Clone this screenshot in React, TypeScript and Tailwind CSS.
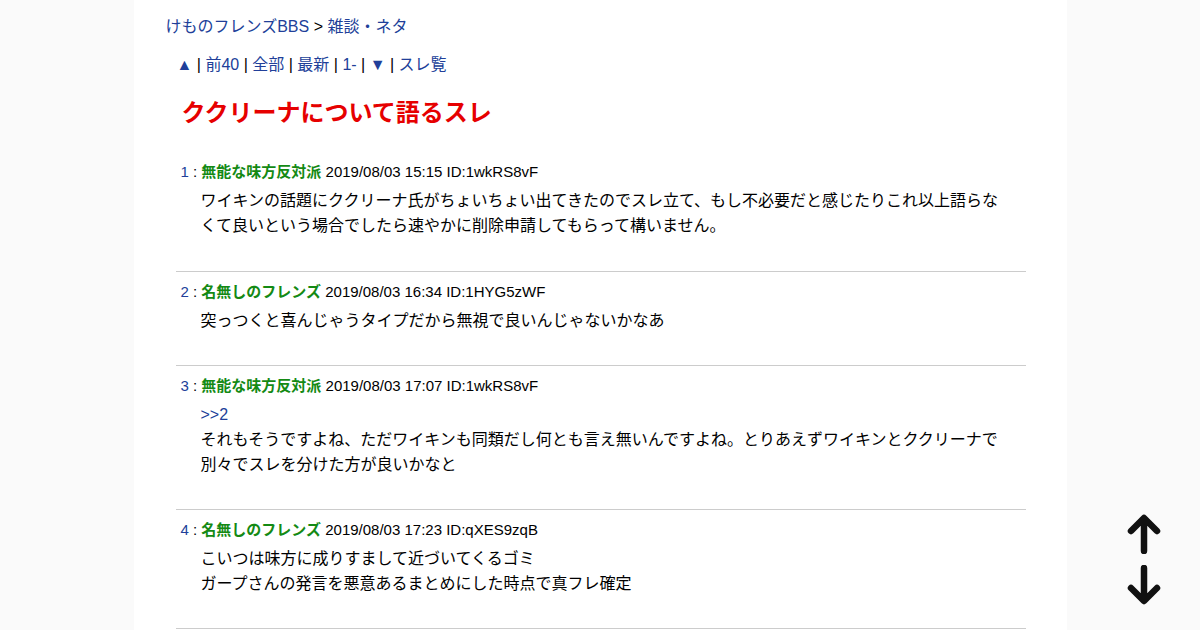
import React from "react";

const font = { fontFamily: '"Liberation Sans", Arial, "Noto Sans CJK JP", sans-serif' };

type Post = { no: number; name: string; date: string; id: string; lines: React.ReactNode[] };

const posts: Post[] = [
  {
    no: 1,
    name: "無能な味方反対派",
    date: "2019/08/03 15:15",
    id: "1wkRS8vF",
    lines: [
      "ワイキンの話題にククリーナ氏がちょいちょい出てきたのでスレ立て、もし不必要だと感じたりこれ以上語らなくて良いという場合でしたら速やかに削除申請してもらって構いません。",
    ],
  },
  {
    no: 2,
    name: "名無しのフレンズ",
    date: "2019/08/03 16:34",
    id: "1HYG5zWF",
    lines: ["突っつくと喜んじゃうタイプだから無視で良いんじゃないかなあ"],
  },
  {
    no: 3,
    name: "無能な味方反対派",
    date: "2019/08/03 17:07",
    id: "1wkRS8vF",
    lines: [
      <a key="a" className="text-[#213f99]">&gt;&gt;2</a>,
      "それもそうですよね、ただワイキンも同類だし何とも言え無いんですよね。とりあえずワイキンとククリーナで別々でスレを分けた方が良いかなと",
    ],
  },
  {
    no: 4,
    name: "名無しのフレンズ",
    date: "2019/08/03 17:23",
    id: "qXES9zqB",
    lines: ["こいつは味方に成りすまして近づいてくるゴミ", "ガープさんの発言を悪意あるまとめにした時点で真フレ確定"],
  },
];

function Sep() {
  return <span className="text-black"> | </span>;
}

export default function App() {
  return (
    <div className="min-h-screen w-full bg-[#fafafa]" style={font}>
      <div className="mx-auto min-h-screen w-[933px] bg-white pl-[32px] pt-[17px]">
        <div className="text-[16px] leading-[20px] text-black">
          <a className="text-[#213f99]">けものフレンズBBS</a> &gt; <a className="text-[#213f99]">雑談・ネタ</a>
        </div>
        <div className="mt-[18px] pl-[11px] text-[16px] leading-[20px] text-[#213f99]">
          <a>▲</a>
          <Sep />
          <a>前40</a>
          <Sep />
          <a>全部</a>
          <Sep />
          <a>最新</a>
          <Sep />
          <a>1-</a>
          <Sep />
          <a>▼</a>
          <Sep />
          <a>スレ覧</a>
        </div>
        <h1 className="mt-[23px] pl-[16px] text-[24px] font-bold leading-[30px] text-[#e60000]">
          ククリーナについて語るスレ
        </h1>
        <div className="ml-[10px] mt-[24px] w-[850px]">
          {posts.map((p) => (
            <div
              key={p.no}
              className={
                p.no === 1
                  ? "border-b border-[#cccccc] pb-[33px] pt-[10px]"
                  : "border-b border-[#cccccc] pb-[32px] pt-[10px]"
              }
            >
              <div className="pl-[5px] text-[15px] leading-[20px] text-black">
                <span className="text-[#213f99]">{p.no}</span>
                <span> : </span>
                <span className="font-bold text-[#148a14]">{p.name}</span>
                <span> {p.date} ID:{p.id}</span>
              </div>
              <div className="mt-[6px] w-[833px] pl-[25px] text-[16px] leading-[25px] text-black">
                {p.lines.map((l, i) => (
                  <div key={i} className="w-[808px]">
                    {l}
                  </div>
                ))}
              </div>
            </div>
          ))}
        </div>
      </div>
      <div className="fixed bottom-[25px] left-[1124px] flex flex-col items-center gap-[11px]">
        <svg width="40" height="40" viewBox="0 0 40 40">
          <path d="M20 37 V5 M7 17 L20 4 L33 17" fill="none" stroke="#111" strokeWidth="6.5" strokeLinecap="round" strokeLinejoin="round" />
        </svg>
        <svg width="40" height="40" viewBox="0 0 40 40">
          <path d="M20 3 V35 M7 23 L20 36 L33 23" fill="none" stroke="#111" strokeWidth="6.5" strokeLinecap="round" strokeLinejoin="round" />
        </svg>
      </div>
    </div>
  );
}
